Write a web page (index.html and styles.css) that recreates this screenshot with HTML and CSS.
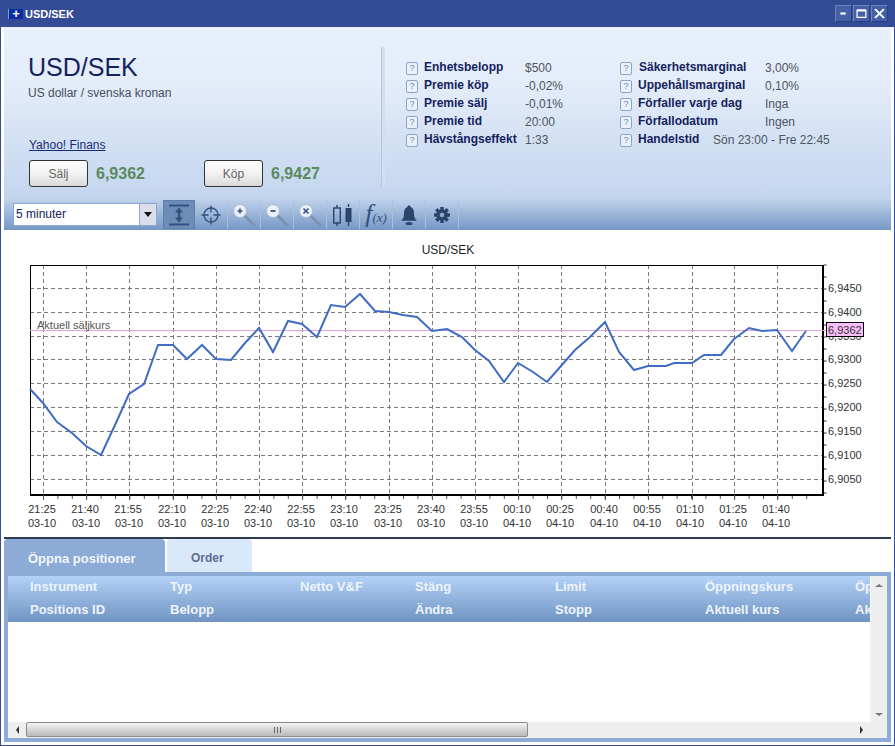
FILE: index.html
```html
<!DOCTYPE html>
<html lang="sv">
<head>
<meta charset="utf-8">
<title>USD/SEK</title>
<link rel="stylesheet" href="styles.css">
</head>
<body>
<div class="window">
  <div class="titlebar">
    <span class="app-icon">+</span>
    <span class="title-text">USD/SEK</span>
    <div class="win-buttons">
      <span class="win-btn"><svg viewBox="0 0 17 17" class="win-glyph"><path d="M5 8.5h6" stroke-width="2.4"/></svg></span>
      <span class="win-btn"><svg viewBox="0 0 17 17" class="win-glyph"><path d="M3.5 5h10v8h-10z" stroke-width="1.4"/><path d="M3.5 5h10" stroke-width="2.4"/></svg></span>
      <span class="win-btn"><svg viewBox="0 0 17 17" class="win-glyph"><path d="M3.5 3.5l10 10M13.5 3.5l-10 10" stroke-width="2.2"/></svg></span>
    </div>
  </div>

  <section class="header">
    <div class="summary">
      <h1 class="pair">USD/SEK</h1>
      <p class="pair-name">US dollar / svenska kronan</p>
      <a class="source-link" href="#">Yahoo! Finans</a>
      <div class="trade-row">
        <div class="trade"><button class="trade-btn">Sälj</button><span class="price">6,9362</span></div>
        <div class="trade"><button class="trade-btn">Köp</button><span class="price">6,9427</span></div>
      </div>
    </div>
    <div class="divider"></div>
    <div class="info info-left">
      <div class="info-row"><span class="q">?</span><span class="lbl">Enhetsbelopp</span><span class="val">$500</span></div>
      <div class="info-row"><span class="q">?</span><span class="lbl">Premie köp</span><span class="val">-0,02%</span></div>
      <div class="info-row"><span class="q">?</span><span class="lbl">Premie sälj</span><span class="val">-0,01%</span></div>
      <div class="info-row"><span class="q">?</span><span class="lbl">Premie tid</span><span class="val">20:00</span></div>
      <div class="info-row"><span class="q">?</span><span class="lbl">Hävstångseffekt</span><span class="val">1:33</span></div>
    </div>
    <div class="info info-right">
      <div class="info-row"><span class="q">?</span><span class="lbl lbl-nudge">Säkerhetsmarginal</span><span class="val">3,00%</span></div>
      <div class="info-row"><span class="q">?</span><span class="lbl">Uppehållsmarginal</span><span class="val">0,10%</span></div>
      <div class="info-row"><span class="q">?</span><span class="lbl">Förfaller varje dag</span><span class="val">Inga</span></div>
      <div class="info-row"><span class="q">?</span><span class="lbl">Förfallodatum</span><span class="val">Ingen</span></div>
      <div class="info-row"><span class="q">?</span><span class="lbl lbl-short">Handelstid</span><span class="val">Sön 23:00 - Fre 22:45</span></div>
    </div>
  </section>

  <div class="toolbar">
    <div class="period"><span class="period-text">5 minuter</span><span class="period-arrow"><span class="tri-down"></span></span></div>
    <div class="tools">
      <div class="tool tool-active"><svg viewBox="0 0 24 24" class="ico"><path d="M2 2.500h20M2 21.500h20" stroke="#34527f" stroke-width="2" fill="none"/><path d="M12 6v12" stroke="#34527f" stroke-width="2.400"/><path d="M12 4.500l-4 5h8zM12 19.500l-4-5h8z" fill="#34527f"/></svg></div>
      <div class="tool"><svg viewBox="0 0 24 24" class="ico"><circle cx="12" cy="12" r="7" fill="none" stroke="#33507a" stroke-width="1.400"/><path d="M2.500 12h7M14.500 12h7M12 2.500v7M12 14.500v7" stroke="#33507a" stroke-width="1.400"/></svg></div>
      <div class="tool"><svg viewBox="0 0 24 24" class="ico"><path d="M12 12l10 10" stroke="#7d92ae" stroke-width="3" stroke-linecap="round"/><circle cx="8" cy="8" r="6.500" fill="#e9f0f8" stroke="#a8bbd3"/><path d="M5.500 8h5M8 5.500v5" stroke="#34527f" stroke-width="1.600"/></svg></div>
      <div class="tool"><svg viewBox="0 0 24 24" class="ico"><path d="M12 12l10 10" stroke="#7d92ae" stroke-width="3" stroke-linecap="round"/><circle cx="8" cy="8" r="6.500" fill="#e9f0f8" stroke="#a8bbd3"/><path d="M5.500 8h5" stroke="#34527f" stroke-width="1.800"/></svg></div>
      <div class="tool"><svg viewBox="0 0 24 24" class="ico"><path d="M12 12l10 10" stroke="#7d92ae" stroke-width="3" stroke-linecap="round"/><circle cx="8" cy="8" r="6.500" fill="#e9f0f8" stroke="#a8bbd3"/><path d="M5.500 5.500l5 5M10.500 5.500l-5 5" stroke="#34527f" stroke-width="1.600"/></svg></div>
      <div class="tool"><svg viewBox="0 0 24 24" class="ico"><path d="M6 2v3M6 20v3M17.500 1v3M17.500 19v4" stroke="#2b4468" stroke-width="1.400"/><rect x="2.700" y="5" width="6.600" height="15" fill="none" stroke="#2b4468" stroke-width="1.400"/><rect x="14.500" y="5" width="6" height="14" fill="#2b4468"/></svg></div>
      <div class="tool tool-fx"><span class="fx-f">f</span><span class="fx-x">(x)</span></div>
      <div class="tool"><svg viewBox="0 0 24 24" class="ico"><path d="M12 2.500c-1 0-1.600.7-1.600 1.600C7.600 5 7 7.500 7 11c0 3.200-1 5-3 6.800h16c-2-1.800-3-3.600-3-6.800 0-3.500-.6-6-3.400-6.900 0-.9-.6-1.600-1.600-1.600z" fill="#2b4468"/><ellipse cx="12" cy="20.500" rx="3.500" ry="1.500" fill="#2b4468"/></svg></div>
      <div class="tool"><svg viewBox="0 0 24 24" class="ico"><path d="M12 4v16M4 12h16M6.300 6.300l11.400 11.400M17.700 6.300L6.300 17.700" stroke="#2b4468" stroke-width="3.400"/><circle cx="12" cy="12" r="5.800" fill="#2b4468"/><circle cx="12" cy="12" r="2.300" fill="#8dabd2"/></svg></div>
    </div>
  </div>

  <div class="chart-wrap">
    <svg class="chart" viewBox="4 230 887 307" width="887" height="307">
      <text class="t-title" x="448" y="254">USD/SEK</text>
      <path class="grid" d="M30 288.500H822M30 312.500H822M30 336.500H822M30 359.500H822M30 383.500H822M30 407.500H822M30 431.500H822M30 455.500H822M30 479.500H822"/>
      <path class="grid" d="M43.500 265V495M86.500 265V495M129.500 265V495M173.500 265V495M216.500 265V495M259.500 265V495M302.500 265V495M345.500 265V495M389.500 265V495M432.500 265V495M475.500 265V495M518.500 265V495M561.500 265V495M605.500 265V495M648.500 265V495M692.500 265V495M734.500 265V495M777.500 265V495"/>
      <path class="axis-thin" d="M30.500 495V265.500H822"/>
      <path class="axis-thick" d="M30 495H823V265"/>
      <path class="tick-minor-x" d="M43 497.500H820"/>
      <path class="tick-minor-y" d="M825 264.500V495"/>
      <path class="ticks" d="M43.500 495v5M86.500 495v5M129.500 495v5M173.500 495v5M216.500 495v5M259.500 495v5M302.500 495v5M345.500 495v5M389.500 495v5M432.500 495v5M475.500 495v5M518.500 495v5M561.500 495v5M605.500 495v5M648.500 495v5M692.500 495v5M734.500 495v5M777.500 495v5"/>
      <path class="bid-line" d="M30 330.500H826"/>
      <text class="t-note" x="37" y="329">Aktuell säljkurs</text>
      <polyline class="series" points="30,389 43,403 57,422 72,433 86,446 101,455 115,425 129,394 144,384 158,345 173,345 187,359 202,345 216,359 231,360 245,343 259,328 273,352 288,321 302,324 317,337 331,305 345,307 360,294 375,311 389,312 403,315 417,317 432,331 447,329 462,337 475,350 489,361 504,382 518,363 533,372 547,382 561,366 575,350 590,337 605,322 619,352 634,370 648,366 666,366 674,363 692,363 704,355 721,355 734,339 749,328 762,331 777,330 792,351 806,331"/>
      <g class="t-y">
        <text x="828" y="292">6,9450</text>
        <text x="828" y="316">6,9400</text>
        <text x="828" y="340">6,9350</text>
        <text x="828" y="363">6,9300</text>
        <text x="828" y="387">6,9250</text>
        <text x="828" y="411">6,9200</text>
        <text x="828" y="435">6,9150</text>
        <text x="828" y="459">6,9100</text>
        <text x="828" y="483">6,9050</text>
      </g>
      <rect class="bid-box" x="826.500" y="322.500" width="37" height="14"/>
      <text class="t-bid" x="828" y="334">6,9362</text>
      <g class="t-x">
        <text x="42" y="513">21:25</text><text x="42" y="527">03-10</text>
        <text x="85" y="513">21:40</text><text x="86" y="527">03-10</text>
        <text x="128" y="513">21:55</text><text x="129" y="527">03-10</text>
        <text x="172" y="513">22:10</text><text x="172" y="527">03-10</text>
        <text x="215" y="513">22:25</text><text x="215" y="527">03-10</text>
        <text x="258" y="513">22:40</text><text x="258" y="527">03-10</text>
        <text x="301" y="513">22:55</text><text x="301" y="527">03-10</text>
        <text x="344" y="513">23:10</text><text x="344" y="527">03-10</text>
        <text x="388" y="513">23:25</text><text x="388" y="527">03-10</text>
        <text x="431" y="513">23:40</text><text x="431" y="527">03-10</text>
        <text x="474" y="513">23:55</text><text x="474" y="527">03-10</text>
        <text x="517" y="513">00:10</text><text x="517" y="527">04-10</text>
        <text x="560" y="513">00:25</text><text x="560" y="527">04-10</text>
        <text x="604" y="513">00:40</text><text x="604" y="527">04-10</text>
        <text x="647" y="513">00:55</text><text x="647" y="527">04-10</text>
        <text x="690" y="513">01:10</text><text x="690" y="527">04-10</text>
        <text x="733" y="513">01:25</text><text x="733" y="527">04-10</text>
        <text x="776" y="513">01:40</text><text x="776" y="527">04-10</text>
      </g>
    </svg>
  </div>

  <div class="rule"></div>
  <div class="tabs">
    <div class="tab tab-active">Öppna positioner</div>
    <div class="tab tab-idle">Order</div>
  </div>
  <section class="panel">
    <div class="panel-top">
      <div class="table-area">
        <div class="table-head">
          <span>Instrument</span><span>Typ</span><span>Netto V&amp;F</span><span>Stäng</span><span>Limit</span><span>Öppningskurs</span><span>Öppningstid</span>
          <span>Positions ID</span><span>Belopp</span><span></span><span>Ändra</span><span>Stopp</span><span>Aktuell kurs</span><span>Aktuell tid</span>
        </div>
        <div class="table-body"></div>
      </div>
      <div class="vscroll"><span class="arrow-up"></span><span class="arrow-down"></span></div>
    </div>
    <div class="hscroll">
      <span class="h-end"><span class="arrow-left"></span></span>
      <div class="h-thumb"><span class="grip"></span></div>
      <span class="h-track"></span>
      <span class="h-end"><span class="arrow-right"></span></span>
      <span class="h-corner"></span>
    </div>
  </section>
</div>
</body>
</html>
```

FILE: styles.css
```css
* { box-sizing: border-box; }
html, body { margin: 0; padding: 0; background: #fff; }
body { font-family: "Liberation Sans", Arial, sans-serif; font-size: 12px; color: #444; overflow: hidden; }

.window { width: 895px; height: 746px; border: 1px solid #344c96; border-top: 0; padding: 0 3px 3px; display: flex; flex-direction: column; overflow: hidden; }

.titlebar { height: 27px; flex: none; margin: 0 -3px; background: #344c96; display: flex; align-items: center; padding: 0 6px 0 7px; }
.app-icon { width: 15px; height: 10px; background: #0a2c9c; color: #fff; font: bold 13px/10px "Liberation Sans", sans-serif; text-align: center; margin-right: 2px; border-left: 1px solid #7f9ad8; }
.title-text { color: #fff; font-weight: bold; font-size: 11px; }
.win-buttons { margin-left: auto; display: flex; gap: 1px; }
.win-btn { width: 17px; height: 17px; background: #4560a6; border: 1px solid #2b3f80; border-top-color: #6a82bd; border-left-color: #6a82bd; display: flex; }
.win-glyph { width: 15px; height: 15px; fill: none; stroke: #fff; }

.header { height: 171px; flex: none; background: linear-gradient(#e8f0fb, #e3ecf9 35%, #c3d5ee); display: flex; }
.summary { width: 377px; flex: none; padding: 26px 0 0 24px; }
.pair { margin: 0; font-size: 25px; line-height: 28px; font-weight: normal; color: #14235e; }
.pair-name { margin: 5px 0 0; font-size: 12px; line-height: 14px; color: #484c5c; }
.source-link { display: block; margin: 38px 0 0 1px; line-height: 14px; color: #1a2a78; }
.trade-row { display: flex; margin: 8px 0 0 1px; }
.trade { width: 175px; display: flex; align-items: center; }
.trade-btn { width: 59px; height: 27px; padding: 0; border: 1px solid #333; border-radius: 3px; background: linear-gradient(#fcfcfc, #f2f2f2 50%, #d9d9d9); font: 12px "Liberation Sans", sans-serif; color: #666; }
.price { margin-left: 8px; font-size: 16px; font-weight: bold; color: #5b8a60; }

.divider { width: 4px; height: 141px; margin-top: 20px; flex: none; background: #d3deee; border-radius: 2px; border-left: 1px solid #b9c6d9; }

.info { padding-top: 31px; flex: none; }
.info-left { width: 214px; margin-left: 21px; }
.info-row { height: 18px; display: flex; align-items: center; }
.q { width: 12px; height: 13px; margin-right: 6px; margin-top: 2px; flex: none; border: 1px solid #8ba5c9; border-radius: 2px; background: #eaf1fb; color: #7189ad; font-size: 9px; line-height: 11px; text-align: center; }
.lbl { font-weight: bold; color: #14235e; white-space: nowrap; flex: none; }
.val { color: #505460; margin-top: 2px; white-space: nowrap; }
.info-left .lbl { width: 101px; }
.info-right .lbl { width: 127px; }
.info-right .lbl-nudge { width: 126px; margin-left: 1px; }
.info-right .lbl-short { width: 75px; }

.toolbar { height: 32px; flex: none; background: linear-gradient(#c6d6ed 0, #bccfe9 8%, #7597c6 100%); display: flex; align-items: flex-start; padding-left: 9px; }
.period { width: 144px; height: 23px; margin-top: 5px; display: flex; background: #fff; border: 1px solid #89a8d0; }
.period-text { flex: 1; padding-left: 2px; line-height: 21px; color: #14235e; }
.period-arrow { width: 17px; background: #d9deea; border-left: 1px solid #89a8d0; display: flex; align-items: center; justify-content: center; }
.tri-down { width: 0; height: 0; border: 4px solid transparent; border-top: 5px solid #111; border-bottom: 0; }

.tools { display: flex; margin: 2px 0 0 6px; }
.tool { width: 33px; height: 29px; display: flex; align-items: center; justify-content: center; border-right: 1px solid #a9c0de; }
.tool-active { width: 32px; background: #6d8cb8; border: 1px solid #5f80ad; }
.ico { width: 24px; height: 24px; }
.tool-fx { color: #34507a; font-family: "Liberation Serif", serif; font-style: italic; align-items: baseline; line-height: 27px; }
.fx-f { font-size: 26px; }
.fx-x { font-size: 13px; }

.chart-wrap { height: 307px; flex: none; background: #fff; }
.chart { display: block; }
.chart text { font-family: "Liberation Sans", Arial, sans-serif; }
.t-title { font-size: 12px; text-anchor: middle; fill: #222; }
.grid { fill: none; stroke: #7a7a7a; stroke-width: 1; stroke-dasharray: 4 3; shape-rendering: crispEdges; }
.axis-thin { fill: none; stroke: #000; stroke-width: 1; shape-rendering: crispEdges; }
.axis-thick { fill: none; stroke: #000; stroke-width: 2; shape-rendering: crispEdges; }
.ticks { fill: none; stroke: #555; stroke-width: 1; shape-rendering: crispEdges; }
.tick-minor-x { fill: none; stroke: #555; stroke-width: 3; stroke-dasharray: 1 13.4; }
.tick-minor-y { fill: none; stroke: #333; stroke-width: 3; stroke-dasharray: 1 11; }
.bid-line { fill: none; stroke: #e3a4e6; stroke-width: 1; }
.t-note { font-size: 11px; fill: #555; }
.series { fill: none; stroke: #406cc4; stroke-width: 2; }
.t-y text, .t-bid, .t-x text { font-size: 11px; fill: #333; }
.t-x text { text-anchor: middle; }
.bid-box { fill: #f9bdf9; stroke: #000; stroke-width: 1; }

.rule { height: 2px; flex: none; background: #2d3a4f; }
.tabs { height: 33px; flex: none; display: flex; align-items: flex-end; gap: 2px; }
.tab { height: 33px; font-weight: bold; border-radius: 4px 4px 0 0; padding-left: 24px; }
.tab-active { width: 161px; background: #8cabd6; color: #f2f6fc; font-size: 13px; line-height: 40px; }
.tab-idle { width: 85px; background: #d9e8fb; color: #5d6d8f; font-size: 12px; line-height: 39px; }

.panel { flex: 1; background: #8cabd6; padding: 4px; display: flex; flex-direction: column; min-height: 0; }
.panel-top { height: 146px; flex: none; display: flex; }
.table-area { width: 862px; flex: none; background: #fff; overflow: hidden; display: flex; flex-direction: column; }
.table-head { height: 46px; flex: none; padding-left: 22px; background: linear-gradient(#b4d2f8, #6f93c2); display: grid; grid-template-columns: 140px 130px 115px 140px 150px 150px 120px; grid-template-rows: 21px 25px; align-items: center; font-size: 13px; font-weight: bold; color: #eef4fc; white-space: nowrap; }
.table-body { flex: 1; background: #fff; }
.vscroll { flex: 1; background: #eeeeee; border-left: 1px solid #f8f8f8; display: flex; flex-direction: column; justify-content: space-between; align-items: center; padding: 8px 0 6px; }
.arrow-up { width: 0; height: 0; border: 4px solid transparent; border-top: 0; border-bottom: 3px solid #777; }
.arrow-down { width: 0; height: 0; border: 4px solid transparent; border-bottom: 0; border-top: 3px solid #777; }

.hscroll { height: 16px; flex: none; background: #eeeeee; display: flex; align-items: stretch; }
.h-end { width: 18px; flex: none; display: flex; align-items: center; justify-content: center; }
.arrow-left { width: 0; height: 0; border: 4px solid transparent; border-left: 0; border-right: 3px solid #333; }
.arrow-right { width: 0; height: 0; border: 4px solid transparent; border-right: 0; border-left: 3px solid #333; }
.h-thumb { width: 502px; flex: none; height: 15px; border: 1px solid #8a8a8a; border-radius: 2px; background: linear-gradient(#f4f4f4, #dcdcdc 40%, #b9b9b9); display: flex; align-items: center; justify-content: center; }
.grip { width: 7px; height: 6px; background: repeating-linear-gradient(90deg, #666 0 1px, transparent 1px 3px); }
.h-track { flex: 1; }
.h-corner { width: 17px; flex: none; }
```
